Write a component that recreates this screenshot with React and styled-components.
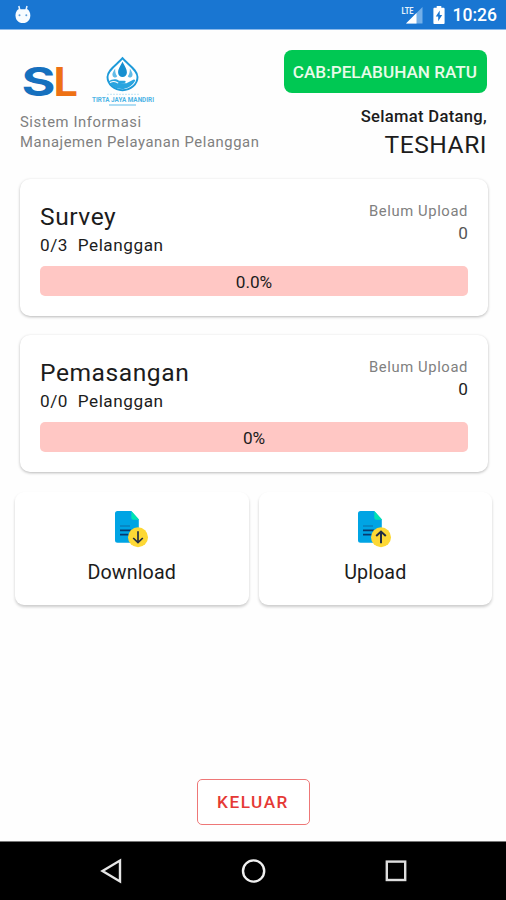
import React from "react";
import styled, { createGlobalStyle } from "styled-components";

const cards = [
  { id: 1, title: "Survey", count: "0/3", pending: 0, percent: "0.0%", dim: true },
  { id: 2, title: "Pemasangan", count: "0/0", pending: 0, percent: "0%" },
];

const actions = [
  { id: 1, label: "Download" },
  { id: 2, label: "Upload", up: true },
];

const DebugIcon = () => (
  <svg width="18" height="20" viewBox="0 0 18 20">
    <path d="M4.800 1l1 4M13 1l-1 4" stroke="#e8f4ff" strokeWidth="1.500" />
    <path
      d="M4.200 4.200h9.400c1.800 1.600 2.700 3.600 2.700 6 0 4.600-2.600 7.800-7.400 7.800s-7.400-3.200-7.400-7.800c0-2.400.9-4.400 2.700-6z"
      fill="#f8fcff"
    />
    <circle cx="5.500" cy="10.300" r="1" fill="#5f9fdc" />
    <circle cx="12.300" cy="10.300" r="1" fill="#5f9fdc" />
  </svg>
);

const SignalIcon = () => (
  <svg width="24" height="20" viewBox="0 0 24 20">
    <path d="M22.500 2v16.500H6z" fill="#74afe8" />
    <path d="M16.500 8v10.500H6z" fill="#fff" />
    <path d="M0 0h14v9.500H0z" fill="#1976d2" />
    <text
      x="1.500"
      y="9"
      textLength="12"
      lengthAdjust="spacingAndGlyphs"
      fontFamily="Roboto, sans-serif"
      fontSize="9"
      fontWeight="700"
      fill="#e6f2fc"
    >
      LTE
    </text>
  </svg>
);

const BatteryIcon = () => (
  <svg width="12" height="18" viewBox="0 0 12 18">
    <path
      d="M3.700 0h4.600v1.700h2.200c.6 0 1.100.5 1.100 1.100v14.100c0 .6-.5 1.100-1.100 1.100H1.500c-.6 0-1.100-.5-1.100-1.100V2.800c0-.6.5-1.100 1.100-1.100h2.200z"
      fill="#fff"
    />
    <path d="M6.700 4.500L2.800 10.600h2.400v4.600l4-6.200H6.700z" fill="#1976d2" />
  </svg>
);

const SLLogo = () => (
  <svg width="60" height="52" viewBox="0 0 60 52">
    <g fontFamily="Inter, sans-serif" fontWeight="700" fontSize="39">
      <text x="1.500" y="39.800" textLength="34" lengthAdjust="spacingAndGlyphs" fill="#1670be">
        S
      </text>
      <text x="33.500" y="39.800" textLength="24.500" lengthAdjust="spacingAndGlyphs" fill="#ee7114">
        L
      </text>
    </g>
  </svg>
);

const TirtaLogo = () => (
  <svg width="68" height="52" viewBox="0 0 68 52">
    <path
      d="M32.500 2.200C28 8 17.500 13.500 17.500 21a15 13.200 0 0 0 30 0c0-7.500-10.500-13-15-18.800z"
      fill="#fff"
      stroke="#1d9ad9"
      strokeWidth="1.900"
    />
    <path d="M32.500 5.800c-2.600 5-4.400 7.500-4.400 10.600a4.400 4.600 0 0 0 8.800 0c0-3.100-1.800-5.600-4.400-10.600z" fill="#168fd0" />
    <path d="M25.200 12.500c-2 3-2.800 4.600-2.800 6.300a2.600 2.800 0 0 0 4.800 1.400c-1.500-2-2.200-4.200-2-7.700z" fill="#62bce8" />
    <path d="M39.800 12.500c2 3 2.800 4.600 2.800 6.300a2.600 2.800 0 0 1-4.800 1.400c1.500-2 2.200-4.200 2-7.700z" fill="#62bce8" />
    <path
      d="M18.500 25.500c3.800-2.800 7.500-2.900 10.500-.8h5.500c1.600.1 1.600 2.100 0 2.200h-4.600l6.600.4 6.700-3.600c1.500-.8 2.700.5 1.500 1.800C41 31 36.500 33 32 33c-6 0-11.500-2.700-13.500-7.500z"
      fill="#2aa4df"
    />
    <path d="M20 26.500c3.500-1.800 5.600-1.500 8.200.6" fill="none" stroke="#fff" strokeWidth="1.100" />
    <path d="M17 38.300h32" stroke="#bfe4f6" strokeWidth="1" strokeDasharray="2 1" />
    <text
      x="2"
      y="46"
      textLength="62"
      lengthAdjust="spacingAndGlyphs"
      fontFamily="Roboto, sans-serif"
      fontSize="6.500"
      fontWeight="700"
      fill="#4db4e6"
    >
      TIRTA JAYA MANDIRI
    </text>
    <path d="M19 49h27" stroke="#83cbef" strokeWidth="1.300" />
  </svg>
);

const FileIcon = ({ up }) => (
  <svg width="36" height="40" viewBox="0 0 36 40">
    <path d="M3.500 1h13.800l7.500 8.500V32.700H3.500A2.500 2.500 0 0 1 1 30.200V3.500A2.500 2.500 0 0 1 3.500 1z" fill="#00a4e4" />
    <path d="M17.300 1l7.900 8.700h-6a1.900 1.900 0 0 1-1.900-1.900z" fill="#00e4b2" />
    <path d="M6 16h10" stroke="#087fbb" strokeWidth="1.500" />
    <path d="M6 20.300h11M6 24.600h8.500" stroke="#073a70" strokeWidth="1.700" />
    <circle cx="24" cy="27.300" r="10" fill="#fdd835" />
    {up ? (
      <path d="M24 33.200V22M19.200 26l4.800-4.500 4.800 4.500" fill="none" stroke="#222d44" strokeWidth="2" />
    ) : (
      <path d="M24 21.300v11.200M19.200 28l4.800 4.500 4.800-4.500" fill="none" stroke="#222d44" strokeWidth="1.700" />
    )}
  </svg>
);

const App = () => {
  return (
    <Screen>
      <GlobalStyle />
      <StatusBar>
        <DebugIcon />
        <StatusRight>
          <SignalIcon />
          <BatteryIcon />
          <Clock>10:26</Clock>
        </StatusRight>
      </StatusBar>

      <Header>
        <Brand>
          <Logos>
            <SLLogo />
            <TirtaLogo />
          </Logos>
          <Tagline>
            Sistem Informasi
            <br />
            Manajemen Pelayanan Pelanggan
          </Tagline>
        </Brand>
        <UserInfo>
          <Branch>CAB:PELABUHAN RATU</Branch>
          <Welcome>Selamat Datang,</Welcome>
          <UserName>TESHARI</UserName>
        </UserInfo>
      </Header>

      <CardList>
        {cards.map((card) => (
          <Card key={card.id}>
            <CardTop>
              <div>
                <Title>{card.title}</Title>
                <Count>{card.count}&nbsp; Pelanggan</Count>
              </div>
              <Pending>
                <PendingLabel>Belum Upload</PendingLabel>
                <PendingValue $dim={card.dim}>{card.pending}</PendingValue>
              </Pending>
            </CardTop>
            <Progress>{card.percent}</Progress>
          </Card>
        ))}
      </CardList>

      <Actions>
        {actions.map((action) => (
          <ActionCard key={action.id}>
            <FileIcon up={action.up} />
            <ActionLabel>{action.label}</ActionLabel>
          </ActionCard>
        ))}
      </Actions>

      <Footer>
        <LogoutButton>KELUAR</LogoutButton>
      </Footer>

      <NavBar>
        <svg width="24" height="26" viewBox="0 0 24 26">
          <path d="M21 2.500v21L3.500 13z" fill="none" stroke="#e6e6e6" strokeWidth="2.400" />
        </svg>
        <svg width="26" height="26" viewBox="0 0 26 26">
          <circle cx="12.600" cy="13" r="10.600" fill="none" stroke="#f0f0f0" strokeWidth="2.400" />
        </svg>
        <svg width="24" height="26" viewBox="0 0 24 26">
          <rect x="2.800" y="3.600" width="18.400" height="18.400" fill="none" stroke="#dedede" strokeWidth="2.400" />
        </svg>
      </NavBar>
    </Screen>
  );
};

export default App;

const GlobalStyle = createGlobalStyle`
  body {
    margin: 0;
    background: #fefefe;
  }
  * {
    box-sizing: border-box;
  }
  svg {
    display: block;
    flex-shrink: 0;
  }
`;

const Screen = styled.div`
  display: flex;
  flex-direction: column;
  width: 506px;
  height: 900px;
  overflow: hidden;
  background: #fefefe;
  font-family: Roboto, sans-serif;
  color: #1c1c1c;
`;

const StatusBar = styled.div`
  display: flex;
  align-items: center;
  justify-content: space-between;
  height: 30px;
  padding: 0 9px 0 14px;
  background: #1976d2;
  border-bottom: 1px solid #8bb9ea;
`;

const StatusRight = styled.div`
  display: flex;
  align-items: center;
  svg + svg {
    margin-left: 9px;
  }
`;

const Clock = styled.span`
  margin-left: 8px;
  font-size: 17.5px;
  font-weight: 500;
  line-height: 32px;
  color: #fff;
`;

const Header = styled.div`
  display: flex;
  justify-content: space-between;
  height: 149px;
  padding: 20px 19px 0 20px;
`;

const Brand = styled.div`
  padding-top: 6px;
`;

const Logos = styled.div`
  display: flex;
  align-items: center;
  gap: 10px;
  height: 52px;
`;

const Tagline = styled.p`
  margin: 4px 0 0;
  font-size: 14.8px;
  line-height: 20px;
  letter-spacing: 0.58px;
  white-space: nowrap;
  color: #808080;
`;

const UserInfo = styled.div`
  display: flex;
  flex-direction: column;
  align-items: flex-end;
`;

const Branch = styled.div`
  height: 43px;
  padding: 0 10px 0 9px;
  border-radius: 8px;
  background: #00c853;
  color: #e9fbe9;
  font-size: 17.15px;
  font-weight: 500;
  line-height: 45px;
  white-space: nowrap;
`;

const Welcome = styled.div`
  margin-top: 12px;
  font-size: 16.6px;
  font-weight: 500;
  line-height: 23px;
  letter-spacing: 0.3px;
`;

const UserName = styled.div`
  font-size: 24.6px;
  line-height: 34px;
  letter-spacing: 0.5px;
`;

const CardList = styled.div`
  display: flex;
  flex-direction: column;
  gap: 19px;
  padding: 0 18px 0 20px;
`;

const Card = styled.div`
  height: 137px;
  padding: 20px;
  border-radius: 10px;
  background: #fff;
  box-shadow: 0 1px 3px rgba(0, 0, 0, 0.28);
`;

const CardTop = styled.div`
  display: flex;
  justify-content: space-between;
  height: 67px;
`;

const Title = styled.div`
  font-size: 24.6px;
  line-height: 36px;
  letter-spacing: 0.55px;
`;

const Count = styled.div`
  font-size: 17.2px;
  line-height: 21px;
  letter-spacing: 0.55px;
  white-space: pre;
`;

const Pending = styled.div`
  padding-top: 1px;
  text-align: right;
`;

const PendingLabel = styled.div`
  font-size: 14.8px;
  line-height: 22px;
  letter-spacing: 0.6px;
  color: #808080;
`;

const PendingValue = styled.div`
  font-size: 17.2px;
  line-height: 22px;
  color: ${({ $dim }) => ($dim ? "#555" : "#222")};
`;

const Progress = styled.div`
  height: 30px;
  border-radius: 5px;
  background: #ffc7c4;
  font-size: 17.2px;
  line-height: 32px;
  text-align: center;
`;

const Actions = styled.div`
  display: flex;
  gap: 10px;
  padding: 20px 14px 0 15px;
`;

const ActionCard = styled.div`
  display: flex;
  flex: 1;
  flex-direction: column;
  align-items: center;
  height: 113px;
  padding-top: 18px;
  border-radius: 9px;
  background: #fff;
  box-shadow: 0 2px 3px rgba(0, 0, 0, 0.2);
`;

const ActionLabel = styled.div`
  margin-top: 11px;
  font-size: 19.7px;
  line-height: 24px;
  letter-spacing: 0.1px;
`;

const Footer = styled.div`
  display: flex;
  flex: 1;
  align-items: flex-end;
  justify-content: center;
  padding-bottom: 16px;
`;

const LogoutButton = styled.button`
  width: 113px;
  height: 46px;
  padding: 0;
  border: 1.500px solid #ee7777;
  border-radius: 5px;
  background: #fff;
  font-family: inherit;
  font-size: 17.2px;
  font-weight: 500;
  line-height: 44px;
  letter-spacing: 1.500px;
  color: #e53935;
`;

const NavBar = styled.div`
  display: flex;
  align-items: center;
  justify-content: space-between;
  height: 59px;
  padding: 0 98px 0 99px;
  border-top: 1px solid #777;
  background: #000;
`;
